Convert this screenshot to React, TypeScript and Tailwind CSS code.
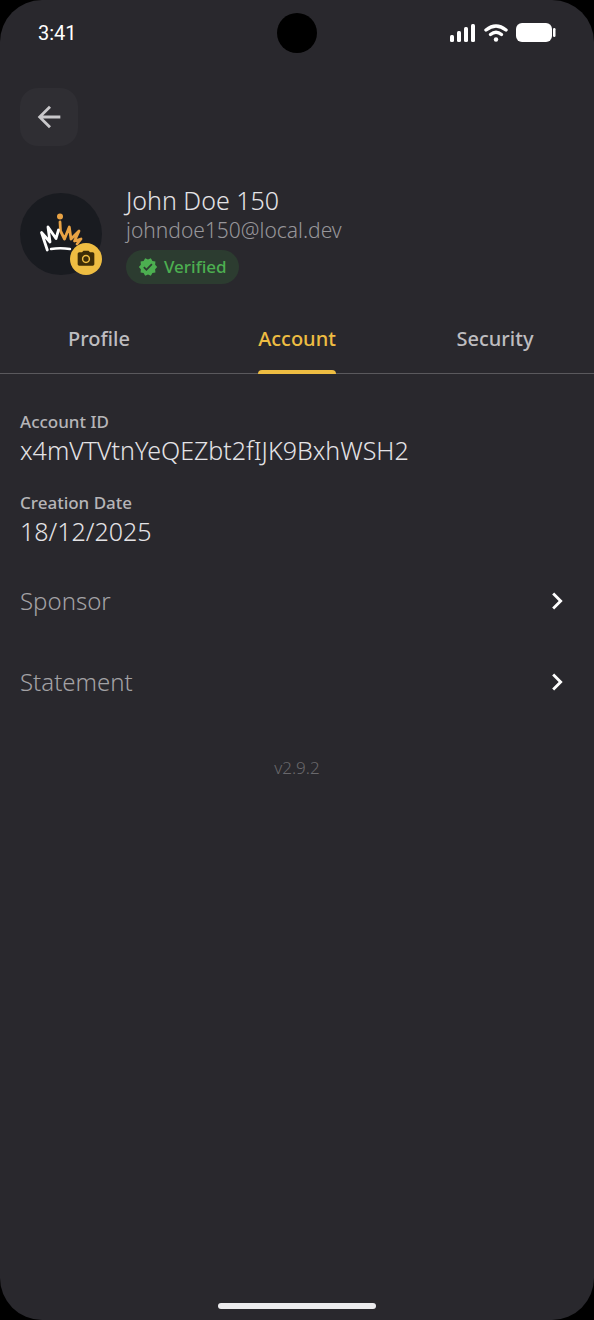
import * as React from "react";
import { clsx } from "clsx";
import { MdArrowBack, MdCameraAlt, MdChevronRight, MdVerified } from "react-icons/md";

const TABS = ["Profile", "Account", "Security"];

const DETAILS = [
  { label: "Account ID", value: "x4mVTVtnYeQEZbt2fIJK9BxhWSH2" },
  { label: "Creation Date", value: "18/12/2025" },
];

const LINKS = ["Sponsor", "Statement"];

export default function App() {
  const [active, setActive] = React.useState("Account");

  return (
    <div className="min-h-screen bg-black">
      <main className="flex min-h-screen flex-col rounded-[42px] bg-[#29282d] font-['Noto_Sans',sans-serif] text-[#e4e3e6]">
        <StatusBar />

        <div className="px-5 pt-[22px]">
          <button
            type="button"
            aria-label="Back"
            className="flex size-[58px] items-center justify-center rounded-[18px] bg-[#2f2e33] text-[#c9c8cb]"
          >
            <MdArrowBack className="size-[34px]" />
          </button>
        </div>

        <ProfileHeader />

        <nav className="mt-4 grid grid-cols-3 border-b border-[#5a595d]">
          {TABS.map((tab) => (
            <Tab key={tab} label={tab} selected={tab === active} onSelect={() => setActive(tab)} />
          ))}
        </nav>

        <dl className="mt-9 flex flex-col gap-6 px-5">
          {DETAILS.map((item) => (
            <div key={item.label}>
              <dt className="text-[17px] leading-6 font-medium text-[#b6b5b8]">{item.label}</dt>
              <dd className="text-[25px] leading-[33px] font-light">{item.value}</dd>
            </div>
          ))}
        </dl>

        <div className="mt-3">
          {LINKS.map((label) => (
            <a
              key={label}
              href={`#${label.toLowerCase()}`}
              className="flex h-[81px] items-center justify-between px-5 text-2xl font-light text-[#a3a2a5]"
            >
              {label}
              <MdChevronRight className="size-[34px] text-white" aria-hidden="true" />
            </a>
          ))}
        </div>

        <p className="mt-[34px] text-center text-[17px] leading-6 font-light text-[#69686c]">v2.9.2</p>

        <div className="mx-auto mt-auto mb-[11px] h-[6px] w-[158px] rounded-full bg-[#ececee]" />
      </main>
    </div>
  );
}

function StatusBar() {
  return (
    <header className="grid h-[66px] grid-cols-3 items-center px-[38px] text-white">
      <span className="font-['Roboto',sans-serif] text-xl">3:41</span>
      <span className="size-10 justify-self-center rounded-full bg-black" />
      <div className="flex items-center gap-2 justify-self-end">
        <svg viewBox="0 0 26 18" className="h-[18px] w-[26px]" fill="currentColor" aria-hidden="true">
          <rect x="0" y="11" width="4" height="7" rx="1.5" />
          <rect x="7" y="7" width="4" height="11" rx="1.5" />
          <rect x="14" y="3" width="4" height="15" rx="1.5" />
          <rect x="21" y="0" width="4" height="18" rx="1.5" />
        </svg>
        <svg
          viewBox="0 0 24 18"
          className="h-[18px] w-6"
          fill="none"
          stroke="currentColor"
          strokeWidth="3.4"
          strokeLinecap="round"
          aria-hidden="true"
        >
          <path d="M2 6Q12-2 22 6" />
          <path d="M6.500 10.500Q12 6 17.500 10.500" />
          <circle cx="12" cy="15.500" r="2.200" fill="currentColor" stroke="none" />
        </svg>
        <svg viewBox="0 0 40 20" className="h-5 w-10" fill="currentColor" aria-hidden="true">
          <rect x="0" y="0" width="36" height="19" rx="6" />
          <rect x="37" y="5" width="2.500" height="9" rx="1.200" />
        </svg>
      </div>
    </header>
  );
}

function ProfileHeader() {
  return (
    <section className="mt-[38px] flex gap-6 px-5">
      <div className="relative mt-[9px] size-[82px] shrink-0 rounded-full bg-[#191b20]">
        <Crown />
        <button
          type="button"
          aria-label="Change photo"
          className="absolute right-0 bottom-0 flex size-8 items-center justify-center rounded-full bg-[#eebd42] text-[#3d2d08]"
        >
          <MdCameraAlt className="size-5" />
        </button>
      </div>
      <div className="min-w-0">
        <h1 className="text-[25px] leading-[33px] font-light">John Doe 150</h1>
        <p className="text-[21px] leading-[27px] font-light text-[#97969a]">johndoe150@local.dev</p>
        <span className="mt-[6px] inline-flex h-[34px] items-center gap-[6px] rounded-full bg-[#2c3c30] px-3 text-[17px] font-medium text-[#4caf50]">
          <MdVerified className="size-5" aria-hidden="true" />
          Verified
        </span>
      </div>
    </section>
  );
}

// Hand-drawn crown: white on the left, amber on the right
function Crown() {
  return (
    <svg
      viewBox="0 0 82 82"
      className="size-full"
      fill="none"
      strokeLinecap="round"
      strokeLinejoin="round"
      aria-hidden="true"
    >
      <g stroke="#e9a344" strokeWidth="2.800">
        <path d="M40 29L40.500 38L44.500 46L49.300 34L51 46L59 38L54.500 48L61 46L57 51" />
        <circle cx="40" cy="23.500" r="3" fill="#e9a344" stroke="none" />
      </g>
      <g stroke="#fff" strokeWidth="2.800">
        <path d="M27.300 57L21.500 39.500L30 49L28 34L36 45.500L38.500 37" />
        <path d="M31 56Q40 54.500 50 56" strokeWidth="2.400" />
      </g>
    </svg>
  );
}

function Tab({
  label,
  selected,
  onSelect,
}: {
  label: string;
  selected: boolean;
  onSelect: () => void;
}) {
  return (
    <button
      type="button"
      aria-current={selected ? "page" : undefined}
      onClick={onSelect}
      className={clsx(
        "-mb-px flex h-[74px] flex-col items-center text-xl font-medium",
        selected ? "text-[#eebd42]" : "text-[#bebdc0]",
      )}
    >
      <span className="flex flex-1 flex-col">
        <span className="flex flex-1 items-center pt-[7px]">{label}</span>
        <span className={clsx("h-1 rounded-t", selected && "bg-[#eebd42]")} />
      </span>
    </button>
  );
}
